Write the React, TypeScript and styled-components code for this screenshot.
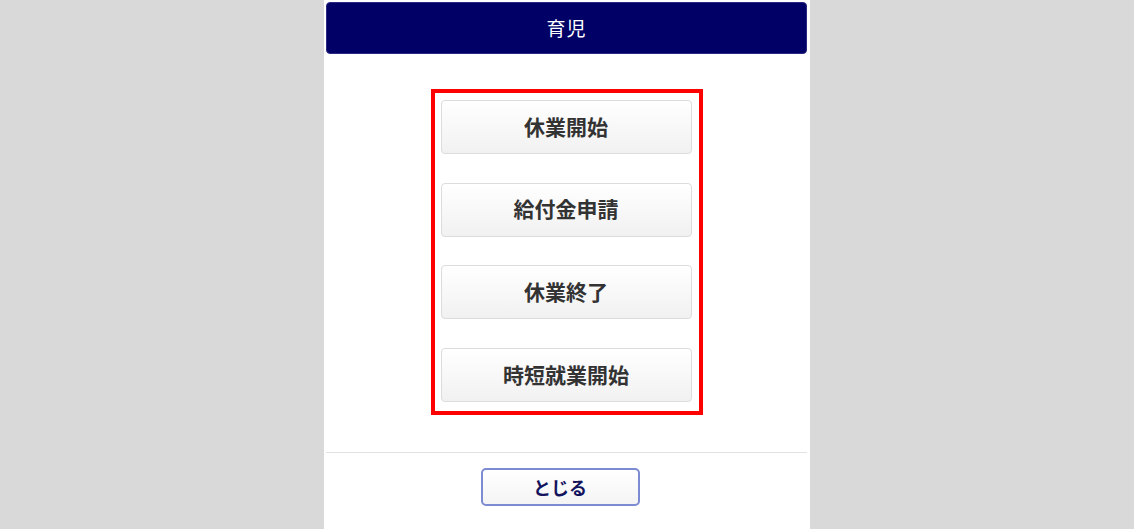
import React from "react";
import styled, { createGlobalStyle } from "styled-components";

const GlobalStyle = createGlobalStyle`
  html, body {
    margin: 0;
    padding: 0;
    background: #d9d9d9;
    font-family: "Noto Sans CJK JP", "Noto Sans", sans-serif;
  }
`;

const Panel = styled.div`
  width: 486px;
  height: 529px;
  margin: 0 auto;
  background: #ffffff;
  display: flex;
  flex-direction: column;
  align-items: stretch;
  padding: 2px 3px 0 2px;
  box-sizing: border-box;
`;

const Header = styled.div`
  height: 52px;
  background: #000066;
  border: 1px solid #2a2a80;
  border-radius: 4px;
  box-sizing: border-box;
  display: flex;
  align-items: center;
  justify-content: center;
  color: #ffffff;
  font-size: 19px;
  font-weight: 400;
  letter-spacing: 1px;
  padding-bottom: 2px;
`;

const Body = styled.div`
  display: flex;
  justify-content: center;
  padding: 35px 0 37px;
`;

const Highlight = styled.div`
  border: 4px solid #ff0000;
  padding: 7px 7px 9px 6px;
  display: flex;
  flex-direction: column;
  gap: 28.7px;
`;

const MenuButton = styled.button`
  width: 251px;
  height: 54px;
  border: 1px solid #dcdcdc;
  border-radius: 4px;
  background: linear-gradient(to bottom, #ffffff 0%, #f1f1f1 100%);
  font-family: "Noto Sans CJK JP", "Noto Sans", sans-serif;
  font-size: 21px;
  font-weight: 700;
  color: #333333;
  display: flex;
  align-items: center;
  justify-content: center;
  padding: 0 0 3px;
  cursor: pointer;
`;

const Divider = styled.hr`
  margin: 0;
  border: none;
  border-top: 1px solid #e2e2e2;
`;

const Footer = styled.div`
  display: flex;
  justify-content: center;
  padding: 15px 13px 0 0;
`;

const CloseButton = styled.button`
  width: 159px;
  height: 38px;
  border: 2px solid #7d8bd2;
  border-radius: 5px;
  background: linear-gradient(to bottom, #ffffff 0%, #f4f4f4 100%);
  font-family: "Noto Sans CJK JP", "Noto Sans", sans-serif;
  font-size: 18px;
  font-weight: 700;
  color: #14145e;
  padding: 0;
  display: flex;
  align-items: center;
  justify-content: center;
  cursor: pointer;
`;

const items = ["休業開始", "給付金申請", "休業終了", "時短就業開始"];

export default function App() {
  return (
    <>
      <GlobalStyle />
      <Panel>
        <Header>育児</Header>
        <Body>
          <Highlight>
            {items.map((label) => (
              <MenuButton key={label}>{label}</MenuButton>
            ))}
          </Highlight>
        </Body>
        <Divider />
        <Footer>
          <CloseButton>とじる</CloseButton>
        </Footer>
      </Panel>
    </>
  );
}
